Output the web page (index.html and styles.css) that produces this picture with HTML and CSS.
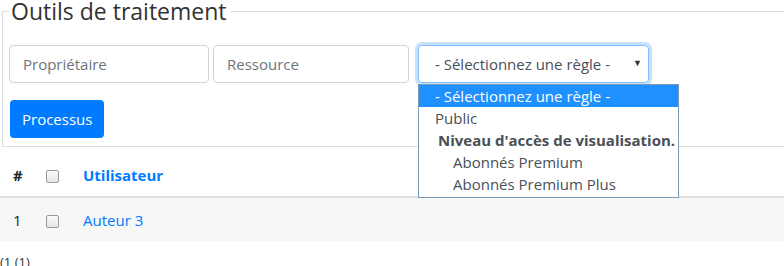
FILE: index.html
```html
<!DOCTYPE html>
<html>
  <head>
    <meta charset="UTF-8" />
    <title>Outils de traitement</title>
    <link rel="stylesheet" href="styles.css">
  </head>
  <body>
    <div class="page">
      <fieldset class="tools">
        <legend>Outils de traitement</legend>
        <div class="filters">
          <input type="text" class="field field-owner" placeholder="Propriétaire" />
          <input type="text" class="field field-res" placeholder="Ressource" />
          <div class="rule-select">
            <span class="rule-value">- Sélectionnez une règle -</span>
            <span class="caret">&#9660;</span>
            <ul class="rule-menu">
              <li class="opt active">- Sélectionnez une règle -</li>
              <li class="opt">Public</li>
              <li class="group">Niveau d'accès de visualisation.</li>
              <li class="opt sub">Abonnés Premium</li>
              <li class="opt sub">Abonnés Premium Plus</li>
            </ul>
          </div>
        </div>
        <button class="btn">Processus</button>
      </fieldset>

      <table class="users">
        <thead>
          <tr>
            <th class="col-num">#</th>
            <th class="col-check"><span class="check"></span></th>
            <th><a href="#">Utilisateur</a></th>
          </tr>
        </thead>
        <tbody>
          <tr>
            <td class="col-num">1</td>
            <td class="col-check"><span class="check"></span></td>
            <td><a href="#" class="user-link">Auteur 3</a></td>
          </tr>
        </tbody>
      </table>

      <div class="pager">(1 (1)</div>
    </div>
  </body>
</html>
```

FILE: styles.css
```css
* {
  box-sizing: border-box;
}
body {
  margin: 0;
  overflow: hidden;
  font-family: "Open Sans", "Noto Sans", sans-serif;
  font-size: 15px;
  color: #212529;
  background: #fff;
}
.page {
  width: 820px;
}

/* fieldset */
.tools {
  margin: 0 0 0 2px;
  padding: 0 8px 8px 6px;
  border: 1px solid #ddd;
  border-right: none;
}
.tools legend {
  font-size: 23px;
  line-height: 22px;
  padding: 0 4px 0 2px;
  color: #333;
}
.filters {
  display: flex;
  align-items: center;
  margin-top: 23px;
}
.field {
  width: 200px;
  height: 38px;
  border: 1px solid #ced4da;
  border-radius: 4px;
  padding: 0 13px;
  font-family: inherit;
  font-size: 15px;
  color: #495057;
}
.field::placeholder {
  color: #6c757d;
}
.field-res {
  width: 196px;
  margin-left: 4px;
}

/* fake select, opened */
.rule-select {
  position: relative;
  margin-left: 9px;
  width: 231px;
  height: 38px;
  border: 1px solid #80bdff;
  border-radius: 4px;
  box-shadow: 0 0 0 3px rgba(0, 123, 255, 0.22);
  display: flex;
  align-items: center;
  justify-content: space-between;
  padding: 0 6px 0 16px;
  color: #495057;
}
.caret {
  font-size: 9px;
  color: #333;
  margin-top: -4px;
}
.rule-menu {
  position: absolute;
  top: 38px;
  left: -1px;
  width: 261px;
  margin: 0;
  padding: 0 0 2px;
  list-style: none;
  background: #fff;
  border: 1px solid #7a9ab8;
  z-index: 2;
}
.rule-menu li {
  height: 22px;
  line-height: 22px;
  white-space: nowrap;
  color: #495057;
}
.rule-menu .opt {
  padding-left: 16px;
}
.rule-menu .active {
  background: #1e90ff;
  color: #fff;
}
.rule-menu .group {
  padding-left: 19px;
  font-weight: bold;
}
.rule-menu .sub {
  padding-left: 34px;
}

.btn {
  margin-top: 17px;
  margin-left: 1px;
  height: 38px;
  padding: 0 12px;
  border: none;
  border-radius: 4px;
  background: #007bff;
  color: #fff;
  font-family: inherit;
  font-size: 15px;
}

/* table */
.users {
  width: 100%;
  border-collapse: collapse;
  margin-top: 4px;
}
.users th,
.users td {
  text-align: left;
  padding: 0;
}
.users thead tr {
  height: 46px;
  border-bottom: 2px solid #dee2e6;
}
.users th {
  font-weight: bold;
  padding-top: 2px;
}
.users tbody tr {
  height: 44px;
  background: #f7f7f7;
}
.col-num {
  width: 46px;
  padding-left: 13px !important;
}
.col-check {
  width: 37px;
}
.check {
  display: inline-block;
  width: 13px;
  height: 13px;
  border: 1px solid #999;
  border-radius: 2px;
  background: linear-gradient(#fafafa, #e6e6e6);
  vertical-align: middle;
}
.users a {
  color: #007bff;
  text-decoration: none;
}
.user-link {
  font-weight: normal;
}

.pager {
  margin-top: 12px;
  font-size: 13px;
  color: #333;
}
```
